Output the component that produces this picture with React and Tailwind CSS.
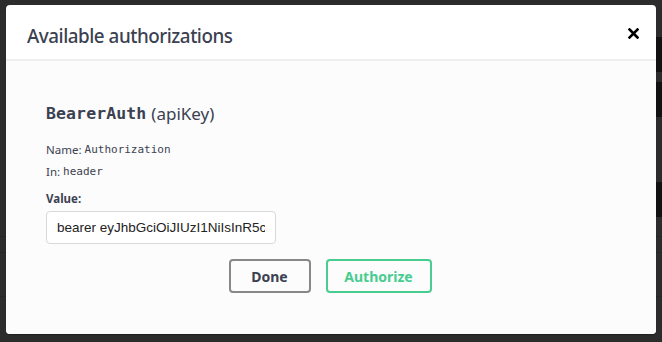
export default function App() {
  return (
    <div className="relative w-[662px] h-[342px] overflow-hidden bg-[#2b2c2b]" style={{ fontFamily: '"Open Sans", sans-serif' }}>
      {/* dimmed page behind */}
      <div className="flex flex-col pt-[37px]">
        <div className="h-[35px] flex justify-end"><div className="w-[6px] bg-[#111211]" /></div>
        <div className="h-[10px]" />
        <div className="h-[35px] flex justify-end"><div className="w-[6px] bg-[#111211]" /></div>
        <div className="h-[65px]" />
        <div className="h-[35px] flex justify-end"><div className="w-[6px] bg-[#111211]" /></div>
        <div className="h-[20px] border-b border-[#1f2a24]" />
        <div className="h-[16px] border-b border-[#1f2a24]" />
        <div className="h-[44px] border-b border-[#1f2a24]" />
      </div>

      {/* modal */}
      <div className="absolute left-[6px] top-[5px] w-[650px] h-[329px] rounded-[4px] bg-white flex flex-col shadow-[0_1px_1px_rgba(0,0,0,0.3)]">
        <div className="h-[56px] flex items-center justify-between pl-[21px] pr-[17px] pt-[7px] border-b-2 border-[#eeeeee]">
          <h3 className="text-[20px] font-medium text-[#3b4151] tracking-[-0.5px]" style={{ fontFamily: '"Noto Sans", sans-serif', transform: 'scaleX(0.94)', transformOrigin: 'left center' }}>
            Available authorizations
          </h3>
          <svg width="11" height="11" viewBox="0 0 11 11" className="mt-[-4px]">
            <path d="M1.5 1.5 L9.5 9.5 M9.5 1.5 L1.5 9.5" stroke="#000" strokeWidth="2.6" strokeLinecap="square" />
          </svg>
        </div>
        <div className="flex-1 bg-[#fcfcfc] rounded-b-[4px] px-[40px] pt-[42px]">
          <h4 className="h-[22px] flex items-center text-[#3b4151] text-[16.5px]">
            <span className="font-bold" style={{ fontFamily: '"DejaVu Sans Mono", monospace', letterSpacing: '0.1px' }}>BearerAuth</span>
            <span className="ml-[5px] text-[17px]" style={{ fontFamily: '"Noto Sans", sans-serif' }}>(apiKey)</span>
          </h4>
          <div className="mt-[17px] h-[16px] flex items-center text-[11.5px] text-[#3b4151]">
            <span style={{ fontFamily: '"Noto Sans", sans-serif' }}>Name:</span>
            <span className="ml-[3px] text-[11px]" style={{ fontFamily: '"DejaVu Sans Mono", monospace' }}>Authorization</span>
          </div>
          <div className="mt-[6px] h-[16px] flex items-center text-[11.5px] text-[#3b4151]">
            <span style={{ fontFamily: '"Noto Sans", sans-serif' }}>In:</span>
            <span className="ml-[3px] text-[11px]" style={{ fontFamily: '"DejaVu Sans Mono", monospace' }}>header</span>
          </div>
          <div className="mt-[11px] h-[16px] flex items-center text-[11.5px] font-bold text-[#3b4151]" style={{ fontFamily: '"Noto Sans", sans-serif' }}>
            Value:
          </div>
          <input
            readOnly
            value="bearer eyJhbGciOiJIUzI1NiIsInR5cCI6IkpXVCJ9"
            className="block mt-[4px] w-[230px] h-[33px] border border-[#d9d9d9] rounded-[4px] bg-white pl-[10px] pr-[10px] text-[13.5px] text-[#222] outline-none"
            style={{ fontFamily: '"Liberation Sans", Arial, sans-serif' }}
          />
          <div className="mt-[15px] flex justify-center gap-[15px] pr-[2px]">
            <button className="w-[82px] h-[34px] border-2 border-[#888888] rounded-[4px] text-[14px] font-bold text-[#3b4151]" style={{ fontFamily: '"Noto Sans", sans-serif' }}>
              Done
            </button>
            <button className="w-[106px] h-[34px] border-2 border-[#49cc90] rounded-[4px] text-[14px] font-bold text-[#49cc90]" style={{ fontFamily: '"Noto Sans", sans-serif' }}>
              Authorize
            </button>
          </div>
        </div>
      </div>
    </div>
  );
}
